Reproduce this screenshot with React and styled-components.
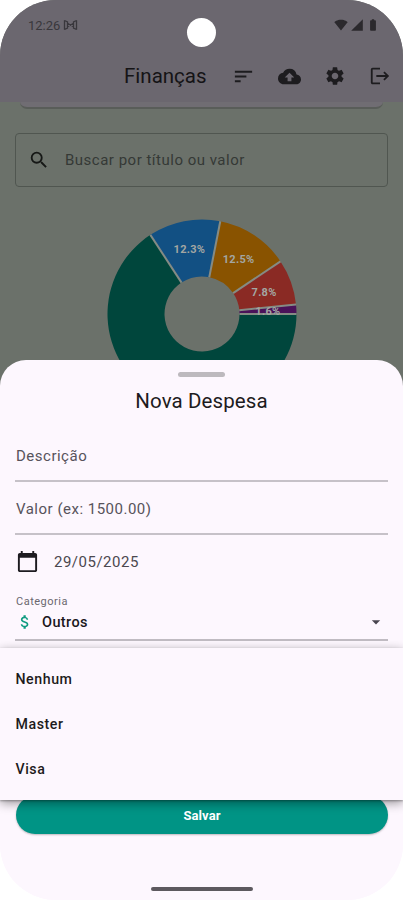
import React from 'react';
import styled, { createGlobalStyle } from 'styled-components';
import {
  MdSort,
  MdBackup,
  MdSettings,
  MdLogout,
  MdSearch,
  MdCalendarToday,
  MdAttachMoney,
  MdArrowDropDown,
  MdSignalWifi4Bar,
  MdSignalCellular4Bar,
  MdBatteryFull,
} from 'react-icons/md';

const GlobalStyle = createGlobalStyle`
  * {
    box-sizing: border-box;
  }

  body {
    margin: 0;
    background: #fff;
    font-family: Roboto, "Liberation Sans", sans-serif;
  }

  svg {
    display: block;
  }
`;

const Phone = styled.div`
  position: relative;
  display: flex;
  flex-direction: column;
  width: 403px;
  height: 900px;
  border-radius: 56px;
  overflow: hidden;
  background: #fdf7fe;
`;

const Page = styled.div`
  height: 390px;
  flex: none;
  overflow: hidden;
  background: #6b716a;
`;

const Header = styled.header`
  height: 102px;
  background: #6b676f;
`;

const StatusBar = styled.div`
  display: flex;
  justify-content: space-between;
  align-items: center;
  height: 50px;
  padding: 0 23px 0 28px;
  color: #2b292d;
`;

const Clock = styled.div`
  display: flex;
  align-items: center;
  gap: 3px;
  font-size: 13px;
  color: #39373c;
`;

const StatusIcons = styled.div`
  display: flex;
  align-items: center;
  gap: 2px;
`;

const Camera = styled.div`
  position: absolute;
  top: 18px;
  left: 187px;
  width: 29px;
  height: 29px;
  border-radius: 50%;
  background: #fff;
`;

const AppBar = styled.div`
  display: flex;
  align-items: center;
  height: 52px;
  padding: 0 12px 0 124px;
  color: #151416;
`;

const AppTitle = styled.h1`
  flex: 1;
  margin: 0;
  font-size: 20.5px;
  font-weight: 400;
  letter-spacing: 0;
`;

const Actions = styled.div`
  display: flex;
  gap: 23px;
  color: #1d1c1f;
`;

const CardEdge = styled.div`
  height: 7px;
  margin: 0 20px;
  border-bottom: 2px solid #595d59;
  border-radius: 0 0 12px 12px;
  background: #706d73;
`;

const SearchBox = styled.div`
  display: flex;
  align-items: center;
  gap: 15px;
  height: 54px;
  margin: 24px 15px 0;
  padding: 0 12px;
  border: 1px solid #505650;
  border-radius: 4px;
  color: #161816;
`;

const Placeholder = styled.span`
  font-size: 15px;
  letter-spacing: 0.5px;
  color: #353936;
`;

const Chart = styled.svg`
  margin: 32px auto 0;
`;

const Sheet = styled.main`
  position: relative;
  flex: 1;
  display: flex;
  flex-direction: column;
  margin-top: -30px;
  padding: 12px 15px 0;
  border-radius: 26px 26px 0 0;
  background: #fdf7fe;
`;

const Handle = styled.div`
  flex: none;
  align-self: center;
  width: 47px;
  height: 5px;
  border-radius: 3px;
  background: #bdb9be;
`;

const SheetTitle = styled.h2`
  margin: 11px 0 0;
  text-align: center;
  font-size: 20.5px;
  line-height: 26px;
  font-weight: 400;
  letter-spacing: 0.1px;
  color: #1d1b20;
`;

const Field = styled.div`
  display: flex;
  align-items: center;
  height: ${(p) => p.$height || 53}px;
  margin-top: ${(p) => p.$gap || 0}px;
  padding: 2px 0 0 1px;
  border-bottom: 2px solid #c6c1c8;
  font-size: 15px;
  letter-spacing: 0.5px;
  color: #57535b;
`;

const DateRow = styled.div`
  display: flex;
  align-items: center;
  gap: 15px;
  height: 53px;
  padding-left: 1px;
  font-size: 15px;
  letter-spacing: 0.5px;
  color: #4b484f;

  svg {
    color: #1d1b20;
  }
`;

const Select = styled.div`
  border-bottom: 2px solid #c0bbc2;
  height: 53px;
  padding: 6px 0 0 1px;
`;

const Label = styled.div`
  font-size: 11px;
  line-height: 15px;
  letter-spacing: 0.5px;
  color: #6b676e;
`;

const SelectValue = styled.div`
  display: flex;
  align-items: center;
  height: 26px;
  padding-right: 2px;
  font-size: 14.5px;
  font-weight: 500;
  letter-spacing: 0.4px;
  color: #1a181c;

  span {
    flex: 1;
    margin-left: 8px;
  }
`;

const Menu = styled.ul`
  position: absolute;
  top: 288px;
  left: 0;
  right: 0;
  height: 152px;
  margin: 0;
  padding: 8px 0;
  list-style: none;
  background: #fdf7fe;
  box-shadow: 0 3px 10px rgba(0, 0, 0, 0.4), 0 1px 2px rgba(0, 0, 0, 0.3);
  clip-path: inset(-8px 0 -18px 0);
`;

const MenuItem = styled.li`
  display: flex;
  align-items: center;
  height: 45.2px;
  padding: 0 15.5px;
  font-size: 14.2px;
  font-weight: 500;
  letter-spacing: 0.55px;
  color: #1d1b20;
`;

const SaveButton = styled.button`
  height: 38px;
  margin: 155px 0 0 1px;
  border: 0;
  border-radius: 19px;
  background: #009485;
  box-shadow: 0 1px 2px rgba(0, 0, 0, 0.25);
  font: 700 13px Roboto, sans-serif;
  letter-spacing: 0.1px;
  color: #fff;
`;

const HomeBar = styled.div`
  align-self: center;
  width: 102px;
  height: 4px;
  margin-top: 53px;
  border-radius: 2px;
  background: #5d595f;
`;

const slices = [
  { value: 1.6, color: '#4a1259', label: '1.6%' },
  { value: 7.8, color: '#8a2a24', label: '7.8%' },
  { value: 12.5, color: '#895300', label: '12.5%' },
  { value: 12.3, color: '#125083', label: '12.3%' },
  { value: 65.8, color: '#00463c', label: '65.8%' },
];

const CENTER = 95;
const OUTER = 94.5;
const INNER = 37.5;

const point = (radius, percent) => {
  const angle = (percent / 100) * Math.PI * 2;
  return [CENTER + radius * Math.cos(angle), CENTER - radius * Math.sin(angle)];
};

const Donut = () => {
  let total = 0;
  const parts = slices.map((slice) => {
    const start = total;
    total += slice.value;
    return { ...slice, start, end: total };
  });

  return (
    <Chart width="190" height="190" viewBox="0 0 190 190">
      {parts.map(({ start, end, value, color, label }) => {
        const large = value > 50 ? 1 : 0;
        const d = `M${point(OUTER, start)} A${OUTER} ${OUTER} 0 ${large} 0 ${point(OUTER, end)} L${point(INNER, end)} A${INNER} ${INNER} 0 ${large} 1 ${point(INNER, start)}Z`;
        return <path key={label} d={d} fill={color} />;
      })}
      {parts.map(({ start, label }) => {
        const [x1, y1] = point(INNER, start);
        const [x2, y2] = point(OUTER, start);
        return <line key={label} x1={x1} y1={y1} x2={x2} y2={y2} stroke="#858b84" strokeWidth="2" />;
      })}
      {parts.map(({ start, end, label }) => {
        const [x, y] = point(66, (start + end) / 2);
        return (
          <text key={label} x={x} y={y + 4} textAnchor="middle" fontSize="11" fontWeight="700" letterSpacing="0.3" fill="#a3a6a2">
            {label}
          </text>
        );
      })}
    </Chart>
  );
};

const CastIcon = () => (
  <svg width="15" height="12" viewBox="0 0 15 12" fill="none" stroke="currentColor" strokeWidth="1.3">
    <path d="M1.5 1.2v9.6M1.5 1.5l3 1.5v6l-3 1.5M13.5 1.2v9.6M13.5 1.5L10.5 3v6l3 1.5M4.5 4.2l6 3.6M4.5 7.8l6-3.6" />
  </svg>
);

const App = () => {
  return (
    <>
      <GlobalStyle />
      <Phone>
        <Page>
          <Header>
            <StatusBar>
              <Clock>
                12:26
                <CastIcon />
              </Clock>
              <StatusIcons>
                <MdSignalWifi4Bar size={14} />
                <MdSignalCellular4Bar size={14} />
                <MdBatteryFull size={14} />
              </StatusIcons>
            </StatusBar>
            <AppBar>
              <AppTitle>Finanças</AppTitle>
              <Actions>
                <MdSort size={23} />
                <MdBackup size={23} />
                <MdSettings size={22} />
                <MdLogout size={22} />
              </Actions>
            </AppBar>
          </Header>
          <CardEdge />
          <SearchBox>
            <MdSearch size={22} />
            <Placeholder>Buscar por título ou valor</Placeholder>
          </SearchBox>
          <Donut />
        </Page>
        <Camera />

        <Sheet>
          <Handle />
          <SheetTitle>Nova Despesa</SheetTitle>
          <Field $gap={15}>Descrição</Field>
          <Field>Valor (ex: 1500.00)</Field>
          <DateRow>
            <MdCalendarToday size={23} />
            29/05/2025
          </DateRow>
          <Select>
            <Label>Categoria</Label>
            <SelectValue>
              <MdAttachMoney size={18} color="#0f9b80" />
              <span>Outros</span>
              <MdArrowDropDown size={20} color="#49454f" />
            </SelectValue>
          </Select>
          <SaveButton>Salvar</SaveButton>
          <HomeBar />
          <Menu>
            <MenuItem>Nenhum</MenuItem>
            <MenuItem>Master</MenuItem>
            <MenuItem>Visa</MenuItem>
          </Menu>
        </Sheet>
      </Phone>
    </>
  );
};

export default App;
